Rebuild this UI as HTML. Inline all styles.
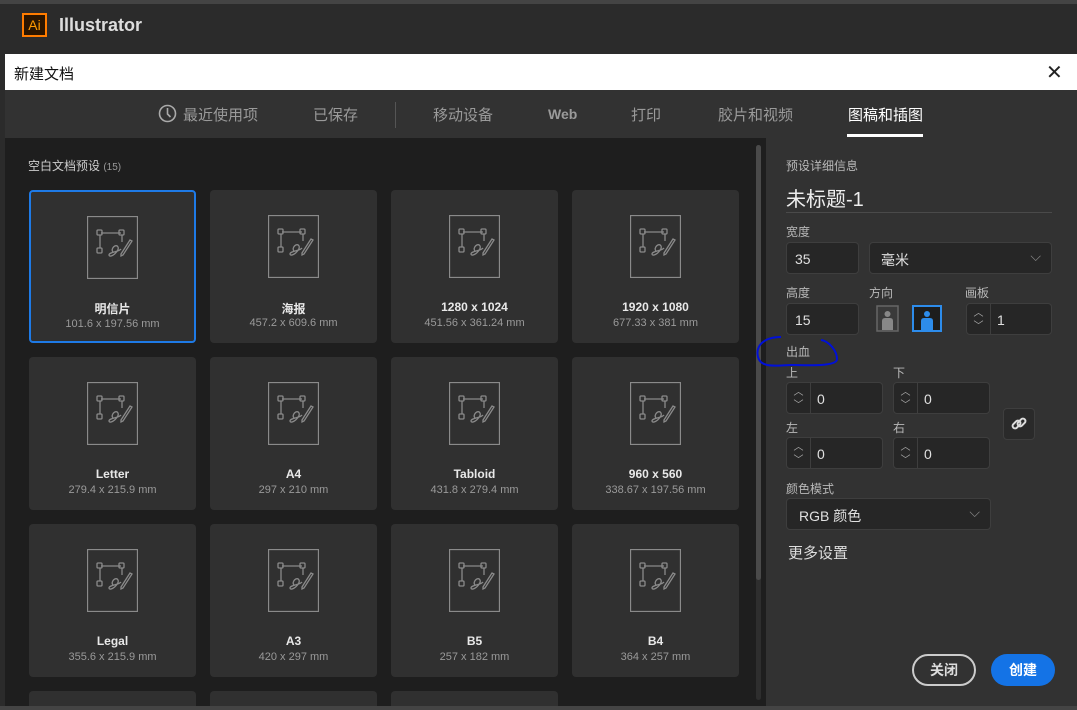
<!DOCTYPE html><html><head><meta charset="utf-8"><style>
*{margin:0;padding:0;box-sizing:border-box}
html,body{width:1077px;height:710px;overflow:hidden}
body{background:#2b2b2b;font-family:"Liberation Sans","Noto Sans CJK SC",sans-serif;position:relative;color:#ccc}
.a{position:absolute}
.card{position:absolute;width:167px;height:153px;background:#303030;border-radius:4px;text-align:center}
.card svg{position:absolute;left:58px;top:25px}
.card .n{position:absolute;top:110px;width:100%;font-size:12px;color:#e8e8e8;font-weight:bold}
.card .s{position:absolute;top:127px;width:100%;font-size:11px;color:#9a9a9a}
.lbl{position:absolute;font-size:12px;color:#b8b8b8}
.box{position:absolute;background:#262626;border:1px solid #3e3e3e;border-radius:4px;color:#e0e0e0;font-size:14px}
.sp{position:absolute;left:0;top:0;bottom:0;width:24px;border-right:1px solid #3e3e3e;color:#aaa;font-size:10px;text-align:center;line-height:13px;padding-top:3px}
.tab{position:absolute;top:104px;font-size:15px;color:#9a9a9a}
</style></head><body>
<div class="a" style="left:0;top:0;width:1077px;height:4px;background:#444"></div>
<div class="a" style="left:22px;top:13px;width:25px;height:24px;border:2px solid #ff7c00;background:#2a1500;color:#ff9a00;font-size:14px;line-height:20px;text-align:center">Ai</div>
<div class="a" style="left:59px;top:15px;font-size:18px;color:#ddd;font-weight:bold">Illustrator</div>
<div class="a" style="left:5px;top:54px;width:1072px;height:36px;background:#fff"></div>
<div class="a" style="left:14px;top:63px;font-size:15px;color:#111">新建文档</div>
<div class="a" style="left:1046px;top:60px;font-size:20px;color:#222">✕</div>
<div class="a" style="left:5px;top:90px;width:1072px;height:48px;background:#323232"></div>
<svg class="a" style="left:158px;top:104px" width="19" height="19"><circle cx="9.5" cy="9.5" r="8" fill="none" stroke="#aaa" stroke-width="1.6"/><path d="M9.5 4v6l3 3" fill="none" stroke="#aaa" stroke-width="1.6"/></svg>
<div class="tab" style="left:183px">最近使用项</div>
<div class="tab" style="left:313px">已保存</div>
<div class="a" style="left:395px;top:102px;width:1px;height:26px;background:#555"></div>
<div class="tab" style="left:433px">移动设备</div>
<div class="tab" style="left:548px;font-size:14px;top:106px;font-weight:bold">Web</div>
<div class="tab" style="left:631px">打印</div>
<div class="tab" style="left:718px">胶片和视频</div>
<div class="tab" style="left:848px;color:#fff">图稿和插图</div>
<div class="a" style="left:847px;top:134px;width:76px;height:3px;background:#fff"></div>
<div class="a" style="left:5px;top:138px;width:761px;height:568px;background:#1e1e1e;overflow:hidden">
<div class="card" style="left:24px;top:553px;height:20px"></div>
<div class="card" style="left:205px;top:553px;height:20px"></div>
<div class="card" style="left:386px;top:553px;height:20px"></div>
</div>
<div class="a" style="left:756px;top:145px;width:5px;height:555px;background:#2e2e2e;border-radius:3px"></div>
<div class="a" style="left:756px;top:145px;width:5px;height:435px;background:#4a4a4a;border-radius:3px"></div>
<div class="a" style="left:766px;top:138px;width:311px;height:568px;background:#323232"></div>
<div class="a" style="left:0;top:706px;width:1077px;height:4px;background:#444"></div>
<div class="a" style="left:28px;top:157px;font-size:12px;color:#ccc">空白文档预设 <span style="font-size:10px;color:#999">(15)</span></div>
<svg width="0" height="0" style="position:absolute"><defs><g id="ic"><rect x="0.5" y="0.5" width="50" height="62" fill="none" stroke="#8a8a8a" stroke-width="1.3"/><path d="M14 17h20M13 19v13M35 19v7" stroke="#8a8a8a" stroke-width="1.3" fill="none"/><rect x="10" y="14" width="5" height="5" rx="1" fill="none" stroke="#8a8a8a" stroke-width="1.3"/><rect x="32" y="14" width="5" height="5" rx="1" fill="none" stroke="#8a8a8a" stroke-width="1.3"/><rect x="10" y="32" width="5" height="5" rx="1" fill="none" stroke="#8a8a8a" stroke-width="1.3"/><path d="M26 36c-3-3 3-9 5-5s-8 12-9 8c0-3 10-3 12-6" fill="none" stroke="#8a8a8a" stroke-width="1.3"/><path d="M34 38l9-14 2 1-9 14-2 1z" fill="none" stroke="#8a8a8a" stroke-width="1.3"/></g></defs></svg>
<div class="card" style="left:29px;top:190px;border:2px solid #1e7ae6"><svg width="51" height="63" style="left:56px;top:24px"><use href="#ic"/></svg><div class="n" style="top:108px">明信片</div><div class="s" style="top:126px">101.6 x 197.56 mm</div></div>
<div class="card" style="left:210px;top:190px"><svg width="51" height="63"><use href="#ic"/></svg><div class="n">海报</div><div class="s">457.2 x 609.6 mm</div></div>
<div class="card" style="left:391px;top:190px"><svg width="51" height="63"><use href="#ic"/></svg><div class="n">1280 x 1024</div><div class="s">451.56 x 361.24 mm</div></div>
<div class="card" style="left:572px;top:190px"><svg width="51" height="63"><use href="#ic"/></svg><div class="n">1920 x 1080</div><div class="s">677.33 x 381 mm</div></div>
<div class="card" style="left:29px;top:357px"><svg width="51" height="63"><use href="#ic"/></svg><div class="n">Letter</div><div class="s">279.4 x 215.9 mm</div></div>
<div class="card" style="left:210px;top:357px"><svg width="51" height="63"><use href="#ic"/></svg><div class="n">A4</div><div class="s">297 x 210 mm</div></div>
<div class="card" style="left:391px;top:357px"><svg width="51" height="63"><use href="#ic"/></svg><div class="n">Tabloid</div><div class="s">431.8 x 279.4 mm</div></div>
<div class="card" style="left:572px;top:357px"><svg width="51" height="63"><use href="#ic"/></svg><div class="n">960 x 560</div><div class="s">338.67 x 197.56 mm</div></div>
<div class="card" style="left:29px;top:524px"><svg width="51" height="63"><use href="#ic"/></svg><div class="n">Legal</div><div class="s">355.6 x 215.9 mm</div></div>
<div class="card" style="left:210px;top:524px"><svg width="51" height="63"><use href="#ic"/></svg><div class="n">A3</div><div class="s">420 x 297 mm</div></div>
<div class="card" style="left:391px;top:524px"><svg width="51" height="63"><use href="#ic"/></svg><div class="n">B5</div><div class="s">257 x 182 mm</div></div>
<div class="card" style="left:572px;top:524px"><svg width="51" height="63"><use href="#ic"/></svg><div class="n">B4</div><div class="s">364 x 257 mm</div></div>
<div class="lbl" style="left:786px;top:157px">预设详细信息</div>
<div class="a" style="left:786px;top:183px;font-size:20px;color:#eee">未标题-1</div>
<div class="a" style="left:786px;top:212px;width:266px;height:1px;background:#4a4a4a"></div>
<div class="lbl" style="left:786px;top:223px">宽度</div>
<div class="box" style="left:786px;top:242px;width:73px;height:32px;padding:8px 8px">35</div>
<div class="box" style="left:869px;top:242px;width:183px;height:32px;padding:7px 11px">毫米<span style="position:absolute;right:10px;top:5px;color:#888">⌵</span></div>
<div class="lbl" style="left:786px;top:284px">高度</div>
<div class="lbl" style="left:869px;top:284px">方向</div>
<div class="lbl" style="left:965px;top:284px">画板</div>
<div class="box" style="left:786px;top:303px;width:73px;height:32px;padding:8px 8px">15</div>
<svg class="a" style="left:876px;top:305px" width="23" height="27"><rect x="1" y="1" width="21" height="25" fill="#3a3a3a" stroke="#666" stroke-width="1.5"/><circle cx="11.5" cy="9" r="3" fill="#888"/><path d="M6 25v-9q0-3 3-3h5q3 0 3 3v9z" fill="#888"/></svg>
<svg class="a" style="left:912px;top:305px" width="30" height="27"><rect x="1" y="1" width="28" height="25" fill="#1d1d1d" stroke="#2d8ceb" stroke-width="2"/><circle cx="15" cy="9" r="3" fill="#2d8ceb"/><path d="M9 25v-9q0-3 3-3h6q3 0 3 3v9z" fill="#2d8ceb"/></svg>
<div class="box" style="left:966px;top:303px;width:86px;height:32px"><div class="sp">︿<br>﹀</div><span style="position:absolute;left:30px;top:8px">1</span></div>
<svg class="a" style="left:755px;top:335px" width="85" height="35"><path d="M26 2C10 2 0 10 3 22s20 8 34 8 45 2 45-6-8-18-16-19" fill="none" stroke="#0010d8" stroke-width="2"/></svg>
<div class="lbl" style="left:786px;top:343px">出血</div>
<div class="lbl" style="left:786px;top:364px">上</div>
<div class="lbl" style="left:893px;top:364px">下</div>
<div class="box" style="left:786px;top:382px;width:97px;height:32px"><div class="sp">︿<br>﹀</div><span style="position:absolute;left:30px;top:8px">0</span></div>
<div class="box" style="left:893px;top:382px;width:97px;height:32px"><div class="sp">︿<br>﹀</div><span style="position:absolute;left:30px;top:8px">0</span></div>
<div class="lbl" style="left:786px;top:419px">左</div>
<div class="lbl" style="left:893px;top:419px">右</div>
<div class="box" style="left:786px;top:437px;width:97px;height:32px"><div class="sp">︿<br>﹀</div><span style="position:absolute;left:30px;top:8px">0</span></div>
<div class="box" style="left:893px;top:437px;width:97px;height:32px"><div class="sp">︿<br>﹀</div><span style="position:absolute;left:30px;top:8px">0</span></div>
<div class="box" style="left:1003px;top:408px;width:32px;height:32px;background:#2a2a2a"><svg width="30" height="30"><g fill="none" stroke="#ddd" stroke-width="2"><rect x="8" y="13" width="9" height="5" rx="2.5" transform="rotate(-45 12.5 15.5)"/><rect x="13" y="11" width="9" height="5" rx="2.5" transform="rotate(-45 17.5 13.5)"/></g></svg></div>
<div class="lbl" style="left:786px;top:480px">颜色模式</div>
<div class="box" style="left:786px;top:498px;width:205px;height:32px;padding:7px 12px">RGB 颜色<span style="position:absolute;right:10px;top:5px;color:#888">⌵</span></div>
<div class="a" style="left:788px;top:542px;font-size:15px;color:#ddd">更多设置</div>
<div class="a" style="left:912px;top:654px;width:64px;height:32px;border:2px solid #ccc;border-radius:16px;text-align:center;line-height:28px;font-size:14px;font-weight:bold;color:#ddd">关闭</div>
<div class="a" style="left:991px;top:654px;width:64px;height:32px;background:#1473e6;border-radius:16px;text-align:center;line-height:32px;font-size:14px;font-weight:bold;color:#fff">创建</div>
</body></html>
